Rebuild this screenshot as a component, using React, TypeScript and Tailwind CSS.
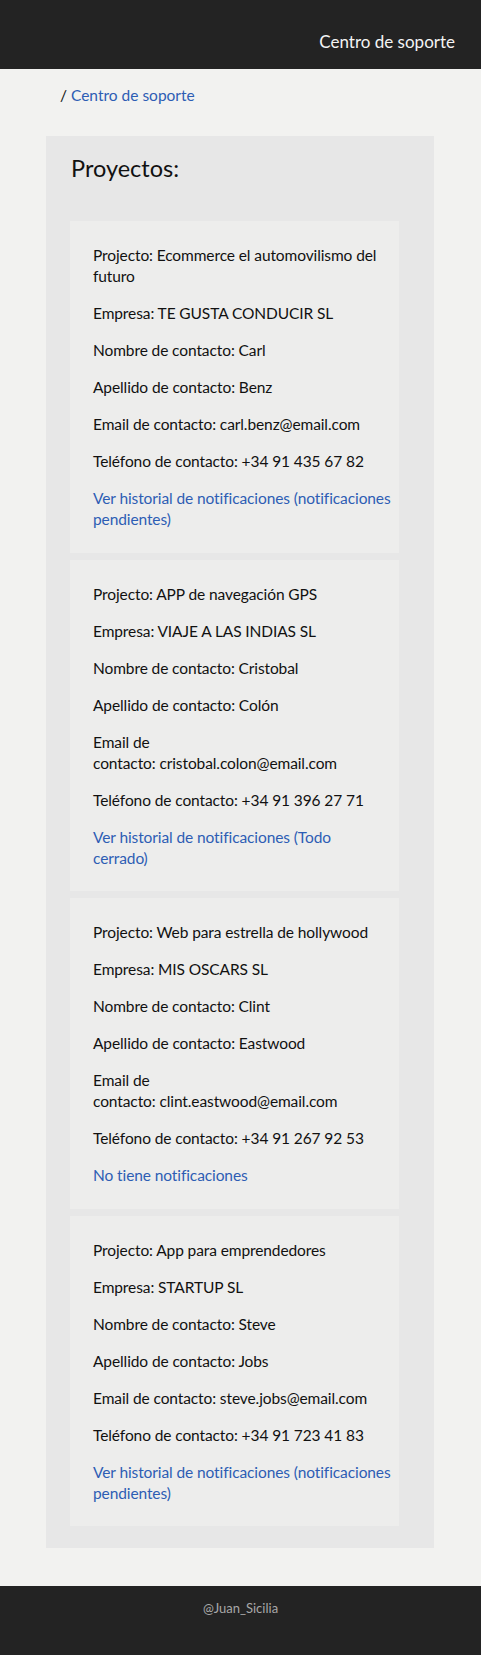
import React from "react";

type Project = {
  proyecto: string;
  empresa: string;
  nombre: string;
  apellido: string;
  emailBreak: boolean;
  email: string;
  telefono: string;
  link: string;
};

const projects: Project[] = [
  {
    proyecto: "Ecommerce el automovilismo del\nfuturo",
    empresa: "TE GUSTA CONDUCIR SL",
    nombre: "Carl",
    apellido: "Benz",
    emailBreak: false,
    email: "carl.benz@email.com",
    telefono: "+34 91 435 67 82",
    link: "Ver historial de notificaciones (notificaciones\npendientes)",
  },
  {
    proyecto: "APP de navegación GPS",
    empresa: "VIAJE A LAS INDIAS SL",
    nombre: "Cristobal",
    apellido: "Colón",
    emailBreak: true,
    email: "cristobal.colon@email.com",
    telefono: "+34 91 396 27 71",
    link: "Ver historial de notificaciones (Todo\ncerrado)",
  },
  {
    proyecto: "Web para estrella de hollywood",
    empresa: "MIS OSCARS SL",
    nombre: "Clint",
    apellido: "Eastwood",
    emailBreak: true,
    email: "clint.eastwood@email.com",
    telefono: "+34 91 267 92 53",
    link: "No tiene notificaciones",
  },
  {
    proyecto: "App para emprendedores",
    empresa: "STARTUP SL",
    nombre: "Steve",
    apellido: "Jobs",
    emailBreak: false,
    email: "steve.jobs@email.com",
    telefono: "+34 91 723 41 83",
    link: "Ver historial de notificaciones (notificaciones\npendientes)",
  },
];

function Card({ p }: { p: Project }) {
  const email = p.emailBreak
    ? `Email de\ncontacto: ${p.email}`
    : `Email de contacto: ${p.email}`;
  return (
    <div className="ml-[24px] w-[329px] bg-[#ededec] pl-[23px] pr-[2px] pt-[24px] pb-[22.5px]">
      <div className="flex flex-col gap-[16px] whitespace-pre-line text-[15.5px] leading-[21px] tracking-[-0.1px] text-[#111111]">
        <p>{`Projecto: ${p.proyecto}`}</p>
        <p>{`Empresa: ${p.empresa}`}</p>
        <p>{`Nombre de contacto: ${p.nombre}`}</p>
        <p>{`Apellido de contacto: ${p.apellido}`}</p>
        <p>{email}</p>
        <p>{`Teléfono de contacto: ${p.telefono}`}</p>
        <p>
          <a href="#" className="text-[#2d5db4]">
            {p.link}
          </a>
        </p>
      </div>
    </div>
  );
}

export default function App() {
  return (
    <div className="min-h-[1655px] bg-[#f2f2f0] font-['Lato',sans-serif] flex flex-col">
      <header className="h-[69px] bg-[#232323] flex justify-end pr-[26px] pt-[30px]">
        <span className="self-start text-[17px] leading-[24px] text-[#f4f4f4]">
          Centro de soporte
        </span>
      </header>

      <nav className="pl-[60px] pt-[16px] text-[15.5px] leading-[21px] text-[#111111]">
        / <a href="#" className="text-[#2d5db4]">Centro de soporte</a>
      </nav>

      <main className="mt-[30px] ml-[46px] w-[388px] bg-[#e7e7e7] pt-[16px] pb-[22px]">
        <h1 className="pl-[25px] text-[23.5px] leading-[32px] text-[#111111]">Proyectos:</h1>
        <div className="mt-[37px] flex flex-col gap-[7px]">
          {projects.map((p, i) => (
            <Card key={i} p={p} />
          ))}
        </div>
      </main>

      <div className="flex-1" />

      <footer className="h-[69px] bg-[#232323] flex justify-center pt-[12px]">
        <span className="text-[13px] leading-[20px] text-[#a8a8a8]">@Juan_Sicilia</span>
      </footer>
    </div>
  );
}
